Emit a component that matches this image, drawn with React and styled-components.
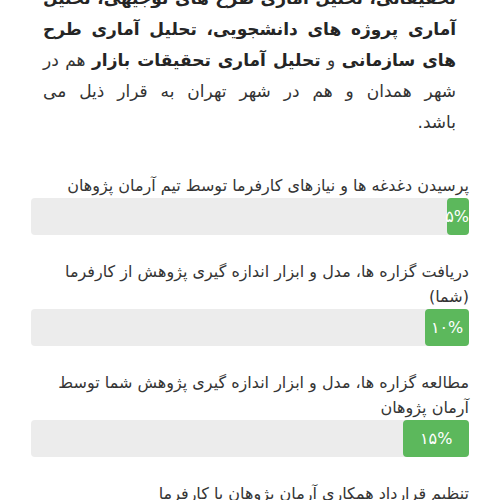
import React from 'react';
import styled, { createGlobalStyle } from 'styled-components';

const GlobalStyle = createGlobalStyle`
  html, body {
    margin: 0;
    padding: 0;
    background: #ffffff;
  }
  body {
    font-family: 'DejaVu Sans', sans-serif;
    color: #333333;
    overflow: hidden;
  }
`;

const Page = styled.div`
  direction: rtl;
  padding: 0 31px;
  margin-top: -17px;
`;

const Intro = styled.div`
  padding: 0 13px 0 12px;
  font-size: 17px;
  line-height: 31px;
  margin-bottom: 35px;
`;

// each line of the intro is spread to full width, the closing one sits right
const Line = styled.div`
  text-align: ${(p) => (p.$last ? 'right' : 'justify')};
  text-align-last: ${(p) => (p.$last ? 'right' : 'justify')};
  white-space: nowrap;
`;

const Strong = styled.strong`
  font-weight: 700;
  color: #252525;
`;

const Step = styled.div`
  margin-bottom: 24px;
`;

const Label = styled.div`
  font-size: 16px;
  line-height: 25px;
  color: #353535;
`;

const Track = styled.div`
  height: 37px;
  background: #ececec;
  border-radius: 4px;
  display: flex;
`;

const Fill = styled.div`
  height: 100%;
  background: #5cb85c;
  border-radius: 4px;
  color: #ffffff;
  font-size: 16px;
  line-height: 37px;
  text-align: center;
  white-space: nowrap;
`;

const steps = [
  { title: 'پرسیدن دغدغه ها و نیازهای کارفرما توسط تیم آرمان پژوهان', value: 5 },
  { title: 'دریافت گزاره ها، مدل و ابزار اندازه گیری پژوهش از کارفرما (شما)', value: 10 },
  { title: 'مطالعه گزاره ها، مدل و ابزار اندازه گیری پژوهش شما توسط آرمان پژوهان', value: 15 },
  { title: 'تنظیم قرارداد همکاری آرمان پژوهان با کارفرما', value: 20 },
];

const toFa = (n) => String(n).replace(/\d/g, (d) => '۰۱۲۳۴۵۶۷۸۹'[d]);

export default function App() {
  return (
    <>
      <GlobalStyle />
      <Page>
        <Intro>
          <Line><Strong>تحقیقاتی، تحلیل آماری طرح های توجیهی، تحلیل</Strong></Line>
          <Line><Strong>آماری پروژه های دانشجویی، تحلیل آماری طرح</Strong></Line>
          <Line>
            <Strong>های سازمانی</Strong> و <Strong>تحلیل آماری تحقیقات بازار</Strong> هم در
          </Line>
          <Line>شهر همدان و هم در شهر تهران به قرار ذیل می</Line>
          <Line $last>باشد.</Line>
        </Intro>
        {steps.map((s) => (
          <Step key={s.value}>
            <Label>{s.title}</Label>
            <Track>
              <Fill style={{ width: `${s.value}%` }}>{toFa(s.value)}%</Fill>
            </Track>
          </Step>
        ))}
      </Page>
    </>
  );
}
